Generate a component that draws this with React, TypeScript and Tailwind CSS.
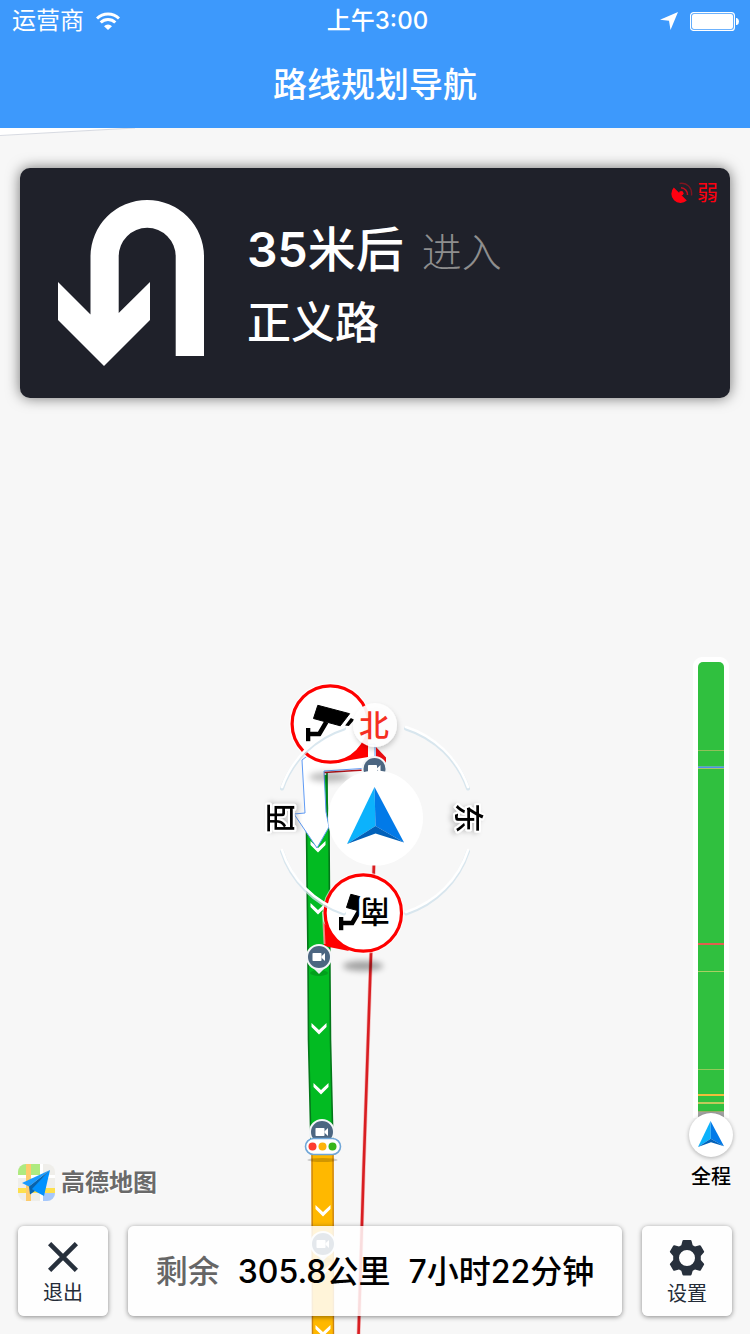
import React from "react";

const ROUTE_BARS = [
  { y: 88, h: 1, color: "#8fc05a" },
  { y: 104, h: 1, color: "#5fb0a8" },
  { y: 105, h: 1, color: "#4a90f0" },
  { y: 106, h: 1, color: "#a5c468" },
  { y: 281, h: 2, color: "#e0604e" },
  { y: 309, h: 1, color: "#a9cf62" },
  { y: 407, h: 1, color: "#93cb58" },
  { y: 432, h: 2, color: "#f0bd3c" },
  { y: 440, h: 2, color: "#c0c95c" },
  { y: 449, h: 1, color: "#9cab6a" },
  { y: 450, h: 12, color: "#a3a3a3" },
];

const CHEVRONS = [
  [318, 847],
  [318, 909],
  [319, 1029],
  [321, 1089],
  [323, 1211],
  [323, 1270],
  [323, 1331],
];

function NavArrow({ className }: { className?: string }) {
  return (
    <svg viewBox="0 0 57 57" className={className} aria-hidden="true">
      <path d="M27.5 0 28 39 0 57Z" fill="#0cb2fc" />
      <path d="M27.5 0 57 55.5 28 39Z" fill="#027ae8" />
      <path d="M0 57 28 39 57 55.5 28.500 46.500Z" fill="#0261b9" />
    </svg>
  );
}

function CameraBadge({ x, y }: { x: number; y: number }) {
  return (
    <g transform={`translate(${x} ${y})`}>
      <ellipse cx="0" cy="16" rx="9" ry="3" fill="#000" opacity="0.15" />
      <path d="M-6 11 0 17 6 11Z" fill="#e6ebef" />
      <circle r="12" fill="#4c6681" stroke="#f4f6f8" strokeWidth="2" />
      <rect x="-6.500" y="-4" width="9" height="8" rx="0.8" fill="#fff" />
      <path d="M2.500 -0.800 6 -4V4L2.500 0.800Z" fill="#fff" />
    </g>
  );
}

function SurveillanceCamera({ x, y }: { x: number; y: number }) {
  return (
    <g transform={`translate(${x} ${y})`}>
      <path d="M-12.500 -18.700 19.300 -10.300 10 1.800 -16.800 -5.500Z" stroke="#000" strokeWidth="1" strokeLinejoin="round" />
      <path d="M20.500 -6 24 -4.300 18.500 2 14.800 1.400Z" />
      <path d="M-4 -2 -11 10H-22" fill="none" stroke="#000" strokeWidth="4.500" />
      <path d="M-24.300 4h4.300v13.200h-4.300Z" />
    </g>
  );
}

function MapCanvas() {
  return (
    <svg
      viewBox="0 0 750 1206"
      preserveAspectRatio="xMidYMax slice"
      className="absolute inset-0 size-full"
      role="img"
      aria-label="导航地图"
    >
      <defs>
        <filter id="soft" x="-50%" y="-100%" width="200%" height="300%">
          <feGaussianBlur stdDeviation="3" />
        </filter>
        <filter id="drop" x="-30%" y="-30%" width="160%" height="160%">
          <feDropShadow dx="1" dy="3" stdDeviation="2.500" floodOpacity="0.2" />
        </filter>
      </defs>
      <g transform="translate(0 -128)">
        <path d="M0 128H135L0 135.500Z" fill="#fff" />
        <path d="M0 135.500 135 128" stroke="#d8dbe2" strokeWidth="1.200" />

        <path d="M374 860 373.500 880 371 953 363.600 1170 358.500 1336" fill="none" stroke="#f3bcbc" strokeWidth="4" />
        <path d="M374 860 373.500 880 371 953 363.600 1170 358.500 1336" fill="none" stroke="#d91e22" strokeWidth="2.600" />

        <path d="M306 775H327L329 830 330 980 330.500 1040 333 1146H311L308.500 1040 308 960 306 830Z" fill="#02bb22" />
        <path d="M327 772V812L329 830 330 980 330.500 1040 333 1146M311 1146 308.500 1040 308 960 306.500 830" fill="none" stroke="#04771a" strokeWidth="1.600" />
        <path d="M311.500 1146H333.500L334 1336H312Z" fill="#ffb800" />
        <path d="M312 1146 312.500 1336M333 1146 333.500 1336" stroke="#cd8512" strokeWidth="1.400" />

        {CHEVRONS.map(([x, y]) => (
          <path key={y} d={`M${x - 7.5} ${y - 6} ${x} ${y + 1} ${x + 7.5} ${y - 6}V${y - 2}L${x} ${y + 5.5} ${x - 7.5} ${y - 2}Z`} fill="#fff" />
        ))}

        <path d="M324 772.500 364 770" stroke="#b3121a" strokeWidth="1.500" />
        <path
          d="M375 744V767L362 768.500 324 771 326 812 329 827 317 848 294 814 305 813 302 760 318 748Z"
          fill="#fff"
          stroke="#5f9bf5"
          strokeWidth="1"
        />

        <ellipse cx="329" cy="777" rx="20" ry="5" fill="#000" opacity="0.25" filter="url(#soft)" />
        <path d="M376 747 386 757.500V764L376 758Z" fill="#e80d12" />
        <CameraBadge x={374.5} y={769} />
        <circle cx="330.300" cy="724" r="41" fill="#fff" opacity="0.8" />
        <path d="M345 761 368 736V757Z" fill="#fe0000" />
        <circle cx="330.300" cy="724" r="38.200" fill="#fff" stroke="#fe0000" strokeWidth="3.200" />
        <SurveillanceCamera x={330.3} y={724} />

        <ellipse cx="363" cy="966" rx="20" ry="5" fill="#000" opacity="0.35" filter="url(#soft)" />
        <circle cx="363.300" cy="913" r="41" fill="#fff" opacity="0.6" />
        <path d="M323 922 324 946 349 951Z" fill="#fe0000" />
        <path d="M323 912 324.500 944" stroke="#fff" strokeWidth="2" opacity="0.5" />
        <circle cx="363.300" cy="913" r="38.200" fill="#fff" stroke="#fe0000" strokeWidth="3.200" />
        <SurveillanceCamera x={363.3} y={913} />

        <CameraBadge x={319} y={957} />
        <CameraBadge x={322} y={1132} />
        <CameraBadge x={323} y={1244} />
        <ellipse cx="322.500" cy="1160" rx="15" ry="2" fill="#000" opacity="0.18" />
        <rect x="305.500" y="1138.500" width="35" height="16" rx="8" fill="#fff" stroke="#6fa6d8" strokeWidth="1.600" />
        <circle cx="312.500" cy="1146.500" r="4" fill="#fd3b30" />
        <circle cx="322.500" cy="1146.500" r="4" fill="#fdb30a" />
        <circle cx="332.500" cy="1146.500" r="4" fill="#37b51b" />

        <g fill="none" strokeLinecap="round">
          <path
            d="M406 727A96.500 96.500 0 0 1 468 787M468 850A96.500 96.500 0 0 1 406 912M344 912A96.500 96.500 0 0 1 282 850M282 787A96.500 96.500 0 0 1 344 727"
            stroke="#cfe1eb"
            strokeWidth="4"
            opacity="0.8"
            transform="translate(0 1.500)"
          />
          <path
            d="M406 727A96.500 96.500 0 0 1 468 787M468 850A96.500 96.500 0 0 1 406 912M344 912A96.500 96.500 0 0 1 282 850M282 787A96.500 96.500 0 0 1 344 727"
            stroke="#fff"
            strokeWidth="2.600"
          />
        </g>
        <circle cx="375.500" cy="818" r="47.500" fill="#fff" />
        <svg x="347" y="787" width="57" height="57" viewBox="0 0 57 57">
          <path d="M27.500 0 28.500 39 0 57Z" fill="#0cb2fc" />
          <path d="M27.500 0 57 55.500 28.500 39Z" fill="#027ae8" />
          <path d="M0 57 28.500 39 57 55.500 28.500 46.500Z" fill="#0261b9" />
        </svg>
        <circle cx="375" cy="725" r="22" fill="#fff" fillOpacity="0.92" filter="url(#drop)" />
        <g textAnchor="middle" fontSize="30" className="font-medium" stroke="#fff" strokeWidth="4" strokeLinejoin="round" paintOrder="stroke">
          <text x="374" y="736" fill="#f52f22" stroke="none">北</text>
          <text transform="translate(469 818) rotate(90)" y="11" filter="url(#drop)">东</text>
          <text transform="translate(375 912) rotate(180)" y="11" strokeWidth="8">南</text>
          <text transform="translate(280 818) rotate(-90)" y="11" filter="url(#drop)">西</text>
        </g>
      </g>
    </svg>
  );
}

function StatusBar() {
  return (
    <div className="grid h-10 grid-cols-3 items-center pt-[2px] pl-3 pr-[11px] text-2xl">
      <div className="flex items-center gap-3">
        <span>运营商</span>
        <svg viewBox="0 0 24 18" className="h-[18px] w-6" fill="none" stroke="#fff" strokeWidth="3" aria-hidden="true">
          <path d="M1 6.500a15.600 15.600 0 0 1 22 0" />
          <path d="M4.700 10.500a10.300 10.300 0 0 1 14.600 0" />
          <path d="M8 14.200a5.700 5.700 0 0 1 8 0L12 18Z" fill="#fff" stroke="none" />
        </svg>
      </div>
      <div className="pl-1 text-center font-medium">上午3:00</div>
      <div className="flex items-center justify-end gap-3">
        <svg viewBox="0 0 18 18" className="size-[18px]" aria-hidden="true">
          <path d="M18 0 10.500 18 9 8.800 0 7.800Z" fill="#fff" />
        </svg>
        <svg viewBox="0 0 49 19" className="h-[19px] w-[49px]" aria-hidden="true">
          <rect x="0.600" y="0.600" width="43.800" height="17.800" rx="3" fill="none" stroke="#fff" strokeWidth="1.200" />
          <rect x="2" y="2" width="41" height="15" rx="2" fill="#fff" />
          <path d="M46 6h1q2 1 2 3.500T47 13h-1Z" fill="#fff" />
        </svg>
      </div>
    </div>
  );
}

function TurnBanner() {
  return (
    <section className="relative mx-5 mt-10 flex h-[230px] items-center gap-[42px] rounded-[10px] bg-[#1f212a] pl-[38px] text-white shadow-[0_0_14px_rgba(0,0,0,0.55)]">
      <svg viewBox="0 0 147 166" className="h-[166px] w-[147px]" fill="#fff" aria-label="掉头">
        <path d="M0 82 32.500 114.500V56.500a56.750 56.500 0 0 1 113.500 0V156H117.700V56.500a28.500 28.700 0 0 0-57 0V113L92 82V120L46 166 0 120Z" />
      </svg>
      <div className="pt-2">
        <p className="flex items-baseline gap-[18px] leading-[72px]">
          <span className="text-5xl">
            <span className="font-semibold">35</span>
            <span className="font-medium">米后</span>
          </span>
          <span className="text-[40px] font-light text-[#8e8e8e]">进入</span>
        </p>
        <p className="text-[44px] font-medium leading-[68px]">正义路</p>
      </div>
      <div className="absolute right-3 top-[11px] flex items-center gap-1 text-[21px] leading-7 text-[#ff0010]">
        <svg viewBox="0 0 22 22" className="size-[22px]" aria-hidden="true">
          <path d="M2.800 5.500 15.800 18.500A9.200 9.200 0 0 1 2.800 5.500Z" fill="#ff0010" />
          <circle cx="10.200" cy="11.300" r="2.300" fill="#ff0010" />
          <path d="M10 5.700a7 7 0 0 1 6.500 7.300" fill="none" stroke="#c40c1c" strokeWidth="1.600" />
          <path d="M8.500 1.500C16 0 21.500 6 20.500 13.500" fill="none" stroke="#7e1520" strokeWidth="1.400" />
        </svg>
        <span>弱</span>
      </div>
    </section>
  );
}

function MapLogo() {
  return (
    <div className="flex items-center gap-[6px] pb-[25px] pl-[18px]">
      <svg viewBox="0 0 37 37" className="size-[37px]" aria-hidden="true">
        <clipPath id="logo-clip">
          <rect width="37" height="37" rx="8" />
        </clipPath>
        <g clipPath="url(#logo-clip)">
          <path d="M0 0H37V37H0Z" fill="#efeeea" />
          <path d="M0 0H22V11H0Z" fill="#aeea80" />
          <path d="M22 0H25V37H22ZM0 11H37V14H0Z" fill="#fff" />
          <path d="M25 29H37V37H25Z" fill="#a6c8fc" />
          <path d="M0 24H37V29H0Z" fill="#fde04e" />
          <path d="M8 0H13V37H8Z" fill="#fdcb6c" />
          <path d="M32 6 4 19 11 22.500Z" fill="#1a9bff" />
          <path d="M32 6 26 32 13 25Z" fill="#0091ff" />
          <path d="M32 6 11 22.500 12 30.500 17 27 14 25Z" fill="#0763ae" />
        </g>
      </svg>
      <span className="pt-px text-2xl font-bold leading-9 text-[#6a6a6a] [text-shadow:0_0_2px_#fff,1px_1px_1px_#fff]">高德地图</span>
    </div>
  );
}

function RouteOverview() {
  return (
    <button type="button" className="mr-[17px] flex w-11 flex-col items-center pb-[34px]">
      <span className="block w-9 rounded-t-[9px] bg-white px-[5px] pt-[5px]">
        <svg viewBox="0 0 26 456" preserveAspectRatio="none" className="block h-[456px] w-full rounded-t-[5px]" aria-hidden="true">
          <rect width="26" height="456" fill="#30c03f" />
          {ROUTE_BARS.map((bar) => (
            <rect key={bar.y} y={bar.y} width="26" height={bar.h} fill={bar.color} />
          ))}
        </svg>
      </span>
      <span className="relative -mt-[5px] flex size-11 items-center justify-center rounded-full bg-white pb-[3px] shadow-[0_1px_4px_rgba(0,0,0,0.3)]">
        <NavArrow className="size-[26px]" />
      </span>
      <span className="mt-[5px] whitespace-nowrap text-xl font-medium leading-[30px] text-black [text-shadow:0_0_3px_#fff]">全程</span>
    </button>
  );
}

const panel = "rounded-md bg-white/85 shadow-[0_1px_5px_rgba(0,0,0,0.45)]";

function BottomBar() {
  return (
    <footer className="flex gap-5 px-[18px] pb-[18px] text-[#242c38]">
      <button type="button" className={`${panel} flex h-[90px] w-[90px] shrink-0 flex-col items-center gap-1 pt-4`}>
        <svg viewBox="0 0 30 30" className="size-[30px]" stroke="#27303c" strokeWidth="4.600" aria-hidden="true">
          <path d="M1.600 1.600 28.400 28.400M28.400 1.600 1.600 28.400" />
        </svg>
        <span className="text-xl leading-[34px]">退出</span>
      </button>
      <p className={`${panel} flex flex-1 items-center justify-center gap-[18px] whitespace-nowrap pt-[2px] text-[32px] font-medium leading-[48px] text-black`}>
        <span className="text-[#666]">剩余</span>
        <span>305.8公里</span>
        <span>7小时22分钟</span>
      </p>
      <button type="button" className={`${panel} flex h-[90px] w-[90px] shrink-0 flex-col items-center pt-[14px]`}>
        <svg viewBox="0 0 36 36" className="size-9" aria-hidden="true">
          <path
            fill="#27303c"
            fillRule="evenodd"
            d="M14.500 0h7q.8 0 1 .8l1.200 4.500 2.300 1.300 4.600-1.300q.8-.2 1.200.5l3.200 5.400q.4.800-.2 1.300l-3 3.500v4l3 3.500q.6.600.2 1.300l-3.200 5.400q-.4.700-1.200.5l-4.600-1.300-2.300 1.300-1.200 4q-.2.800-1 .8h-7q-.8 0-1-.8l-1.200-4-2.300-1.300-4.600 1.300q-.8.200-1.200-.5L1 24.800q-.4-.7.200-1.300l3-3.500v-4l-3-3.500Q.6 12 1 11.200l3.200-5.400q.4-.7 1.200-.5L10 6.600l2.300-1.300L13.500.8q.2-.8 1-.8ZM18 10a8 8 0 1 0 0 16 8 8 0 0 0 0-16Z"
          />
        </svg>
        <span className="text-xl leading-9">设置</span>
      </button>
    </footer>
  );
}

export default function App() {
  return (
    <div className="flex min-h-screen flex-col bg-[#f7f7f7] font-[Inter,'Noto_Sans_CJK_SC',sans-serif]">
      <header className="bg-[#3d99fc] text-white">
        <StatusBar />
        <h1 className="pt-[2px] text-center text-[34px] font-medium leading-[86px]">路线规划导航</h1>
      </header>
      <main className="relative flex flex-1 flex-col overflow-hidden">
        <MapCanvas />
        <div className="relative flex flex-1 flex-col">
          <TurnBanner />
          <div className="flex flex-1 items-end justify-between">
            <MapLogo />
            <RouteOverview />
          </div>
          <BottomBar />
        </div>
      </main>
    </div>
  );
}
